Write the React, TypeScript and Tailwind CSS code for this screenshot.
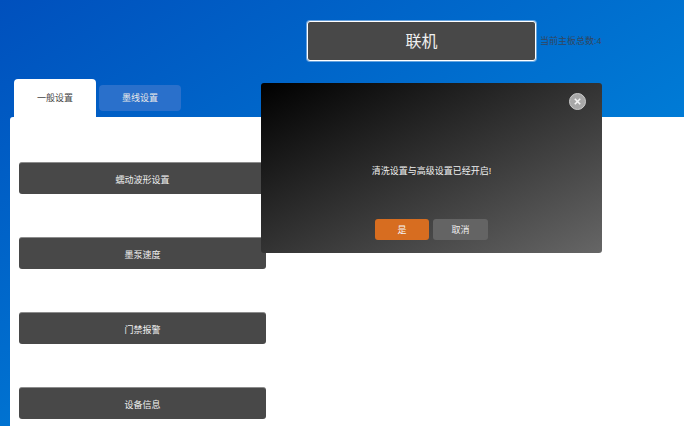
const FONT = "font-['Liberation_Sans','Noto_Sans_CJK_SC',sans-serif]";

const MENU_ITEMS = ['蠕动波形设置', '墨泵速度', '门禁报警', '设备信息'];

export default function App() {
  return (
    <div className={`relative h-[426px] w-[684px] overflow-hidden bg-linear-to-br/srgb from-[#0050bd] to-[#0094e4] ${FONT}`}>
      {/* Header */}
      <div className="flex items-center pl-[307px] pt-[21px]">
        <button className="h-[40px] w-[229px] rounded-[3px] border border-white bg-[#484848] pt-[2px] text-[16px] text-[#f0f0f0] ring-1 ring-white/40">
          联机
        </button>
        <span className="ml-[4px] pt-[2px] text-[9px] text-[#33465e]">当前主板总数:4</span>
      </div>

      {/* Tabs */}
      <div className="mt-[18px] flex items-end gap-[3px] pl-[14px]">
        <div className="flex h-[38px] w-[82px] items-center justify-center rounded-t-[4px] bg-white pt-[2px] text-[9px] text-[#444]">
          一般设置
        </div>
        <div className="mb-[6px] flex h-[26px] w-[82px] items-center justify-center rounded-[4px] bg-[#2a70cb] pt-px text-[9px] text-[#e8e8e8]">
          墨线设置
        </div>
      </div>

      {/* Panel */}
      <div className="ml-[10px] flex h-[320px] flex-col gap-[43px] rounded-tl-[3px] bg-white pl-[9px] pt-[45px]">
        {MENU_ITEMS.map((item) => (
          <button
            key={item}
            className="h-[32px] w-[247px] shrink-0 rounded-[3px] border-t border-[#8c8c8c] bg-[#484848] pt-[4px] text-[9px] text-[#f0f0f0]"
          >
            {item}
          </button>
        ))}
      </div>

      {/* Dialog */}
      <div className="absolute left-[261px] top-[83px] flex h-[170px] w-[341px] flex-col items-center rounded-[3px] bg-linear-to-br/srgb from-black to-[#666]">
        <button className="absolute right-[16px] top-[10px] flex h-[17px] w-[17px] items-center justify-center rounded-full border border-[#ccc] bg-[#a8a8a8]">
          <svg className="h-[9px] w-[9px]" viewBox="0 0 10 10" fill="none" stroke="#f4f4f4" strokeWidth={1.8}>
            <path d="M2 2l6 6M8 2l-6 6" />
          </svg>
        </button>
        <p className="mt-[82px] text-[9px] leading-[13px] text-[#f0f0f0]">清洗设置与高级设置已经开启!</p>
        <div className="mt-[41px] flex gap-[4px]">
          <button className="h-[21px] w-[54px] rounded-[3px] bg-[#d76d20] pt-[2px] text-[9px] text-[#f5f5f5]">是</button>
          <button className="h-[21px] w-[55px] rounded-[3px] bg-[#646464] pt-[2px] text-[9px] text-[#f0f0f0]">取消</button>
        </div>
      </div>
    </div>
  );
}
